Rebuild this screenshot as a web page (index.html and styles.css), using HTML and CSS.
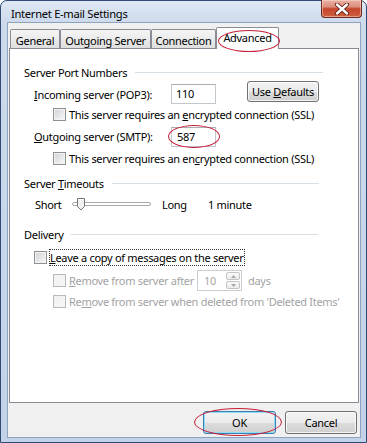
FILE: index.html
```html
<!DOCTYPE html>
<html>
<head>
<meta charset="utf-8">
<title>Internet E-mail Settings</title>
<link rel="stylesheet" href="styles.css">
</head>
<body>
<div class="window">
  <div class="titlebar">
    <span class="title">Internet E-mail Settings</span>
    <span class="close">
      <svg width="16" height="12" viewBox="0 0 16 12">
        <path d="M3 1.5 L13 10.5 M13 1.5 L3 10.5" stroke="#5a1d14" stroke-width="4.2" stroke-linecap="round"/>
        <path d="M3 1.5 L13 10.5 M13 1.5 L3 10.5" stroke="#ffffff" stroke-width="2.4" stroke-linecap="round"/>
      </svg>
    </span>
  </div>
  <div class="frame-body">
    <div class="client">
      <div class="tabs">
        <div class="tab tab-general">General</div>
        <div class="tab tab-outgoing">Outgoing Server</div>
        <div class="tab tab-connection">Connection</div>
        <div class="tab tab-advanced active">Advanced<span class="ring ring-tab"></span></div>
      </div>
      <div class="panel">
        <div class="group-title gt-ports"><span>Server Port Numbers</span></div>
        <div class="row row-in">
          <span class="port-label"><u>I</u>ncoming server (POP3):</span>
          <span class="textbox tb-in">110</span>
          <button class="btn btn-defaults"><span>Use <u>D</u>efaults</span></button>
        </div>
        <div class="row row-check check-1">
          <span class="checkbox"></span>
          <span class="check-label">This server requires an <u>e</u>ncrypted connection (SSL)</span>
        </div>
        <div class="row row-out">
          <span class="port-label"><u>O</u>utgoing server (SMTP):</span>
          <span class="textbox tb-out">587<span class="ring ring-587"></span></span>
        </div>
        <div class="row row-check check-2">
          <span class="checkbox"></span>
          <span class="check-label">This server requires an en<u>c</u>rypted connection (SSL)</span>
        </div>
        <div class="group-title gt-timeouts"><span>Server <u>T</u>imeouts</span></div>
        <div class="row row-slider">
          <span class="slider-short">Short</span>
          <svg class="slider" width="80" height="16" viewBox="0 0 80 16">
            <rect x="0.5" y="6.5" width="78" height="3" rx="1.5" fill="#ffffff" stroke="#a8a8a8"/>
            <path d="M5.5 2.5 H12.5 V10.5 L9 14 L5.5 10.5 Z" fill="#f1f1f1" stroke="#767676"/>
            <path d="M6.5 3.5 H11.5" stroke="#ffffff"/>
          </svg>
          <span class="slider-long">Long</span>
          <span class="slider-value">1 minute</span>
        </div>
        <div class="group-title gt-delivery"><span>Delivery</span></div>
        <div class="row row-leave">
          <span class="checkbox"></span>
          <span class="check-label focus"><u>L</u>eave a copy of messages on the server</span>
        </div>
        <div class="row row-check row-after disabled">
          <span class="checkbox"></span>
          <span class="check-label after-label"><u>R</u>emove from server after</span>
          <span class="spinbox">
            <span class="spin-val">10</span>
            <span class="spin-btns">
              <span class="spin-btn"><svg width="5" height="3" viewBox="0 0 5 3"><path d="M0 3 L2.5 0 L5 3 Z" fill="#a9a9a9"/></svg></span>
              <span class="spin-btn"><svg width="5" height="3" viewBox="0 0 5 3"><path d="M0 0 L2.5 3 L5 0 Z" fill="#a9a9a9"/></svg></span>
            </span>
          </span>
          <span class="days">days</span>
        </div>
        <div class="row row-check row-deleted disabled">
          <span class="checkbox"></span>
          <span class="check-label">Re<u>m</u>ove from server when deleted from 'Deleted Items'</span>
        </div>
      </div>
      <div class="buttons">
        <button class="btn btn-ok"><span>OK</span><span class="ring ring-ok"></span></button>
        <button class="btn btn-cancel"><span>Cancel</span></button>
      </div>
    </div>
  </div>
</div>
</body>
</html>
```

FILE: styles.css
```css
* { box-sizing: border-box; margin: 0; padding: 0; }
html, body { width: 367px; height: 443px; overflow: hidden; }
body {
  font-family: "Noto Sans", "Segoe UI", sans-serif;
  font-size: 11px;
  letter-spacing: -0.3px;
  color: #000;
  background: #ffffff;
}
u { text-decoration: underline; text-underline-offset: 1px; }

.window {
  width: 367px;
  height: 443px;
  border: 1px solid #2f4a73;
  border-radius: 7px 7px 0 0;
  background: linear-gradient(180deg, #dfe8f4 0, #cddaec 22px, #c2d3e9 100%);
  display: flex;
  flex-direction: column;
}
.titlebar {
  height: 21px;
  flex: none;
  display: flex;
  justify-content: space-between;
  align-items: flex-start;
  padding-left: 10px;
}
.title { margin-top: 6px; line-height: 14px; font-size: 11.2px; color: #000; }
.close {
  width: 41px;
  height: 18px;
  margin-top: -1px;
  margin-right: 4px;
  border: 1px solid #6b2a22;
  border-top: none;
  border-radius: 0 0 4px 4px;
  background: linear-gradient(180deg, #eab2a5 0, #dc8e7c 40%, #c5452d 52%, #d0603e 100%);
  box-shadow: inset 0 0 0 1px rgba(255, 220, 210, 0.5);
  display: flex;
  align-items: center;
  justify-content: center;
}

.frame-body {
  flex: 1;
  display: flex;
  padding: 0 5px 4px 6px;
}
.client {
  flex: 1;
  border: 1px solid #8ea3c0;
  background: #f0f0f0;
  display: flex;
  flex-direction: column;
}

.tabs {
  height: 25px;
  flex: none;
  display: flex;
  align-items: flex-end;
  padding-left: 2px;
}
.tab {
  height: 19px;
  border: 1px solid #898c95;
  border-bottom: none;
  border-radius: 2px 2px 0 0;
  background: linear-gradient(180deg, #f5f5f5 0, #ebebeb 50%, #dedede 100%);
  text-align: center;
  line-height: 14px;
  padding-top: 4px;
}
.tab-general { width: 50px; }
.tab-outgoing { width: 91px; }
.tab-connection { width: 65px; }
.tab-advanced { width: 63px; }
.tab.active {
  position: relative;
  z-index: 2;
  height: 22px;
  margin-bottom: -1px;
  padding-top: 3px;
  background: linear-gradient(180deg, #ffffff 0, #fbfcfe 100%);
}

.panel {
  height: 355px;
  flex: none;
  margin: 0 1px;
  border: 1px solid #898c95;
  background: #ffffff;
  display: flex;
  flex-direction: column;
}

.group-title {
  display: flex;
  align-items: center;
  height: 16px;
  margin-left: 14px;
  margin-right: 36px;
  white-space: nowrap;
}
.group-title::after {
  content: "";
  flex: 1;
  height: 1px;
  margin-left: 8px;
  background: #d5dfe5;
}
.gt-ports { margin-top: 15px; margin-right: 35px; }
.gt-timeouts { margin-top: 9px; margin-right: 39px; }
.gt-delivery { margin-top: 14px; margin-right: 40px; }

.row {
  display: flex;
  margin-left: 24px;
  white-space: nowrap;
}
.row-in { height: 24px; align-items: flex-start; }
.row-out { height: 22px; margin-top: 3px; align-items: flex-start; }
.port-label { width: 137px; line-height: 16px; margin-top: 7px; }
.row-out .port-label { margin-top: 4px; }

.textbox {
  position: relative;
  width: 45px;
  height: 20px;
  border: 1px solid #c2c6cd;
  border-top-color: #abadb3;
  background: #fff;
  line-height: 18px;
  padding-left: 4px;
}
.tb-in { margin-top: 4px; }
.tb-out { margin-top: 2px; padding-left: 5px; }

.btn {
  font: inherit;
  letter-spacing: inherit;
  color: #000;
  border: 1px solid #707070;
  border-radius: 3px;
  background: linear-gradient(180deg, #f2f2f2 0, #ebebeb 50%, #dddddd 51%, #cfcfcf 100%);
  box-shadow: inset 0 0 0 1px rgba(255, 255, 255, 0.75);
  display: flex;
  align-items: center;
  justify-content: center;
  position: relative;
}
.btn-defaults { width: 72px; height: 21px; margin-top: 1px; margin-left: 31px; }

.row-check { height: 15px; align-items: center; padding-left: 19px; }
.check-1 { margin-top: 3px; }
.check-2 { margin-top: 4px; }
.checkbox {
  width: 13px;
  height: 13px;
  flex: none;
  border: 1px solid #8e8f8f;
  background: linear-gradient(135deg, #cbcfd5 0, #e6e8eb 55%, #f7f7f7 100%);
  box-shadow: inset 0 0 0 1px #f4f4f4;
}
.check-label { margin-left: 3px; line-height: 15px; }

.row-slider { height: 16px; margin-top: 5px; align-items: center; }
.slider-short { width: 38px; padding-left: 1px; }
.slider { flex: none; }
.slider-long { width: 46px; margin-left: 10px; }

.row-leave { height: 17px; margin-top: 7px; align-items: center; }
.check-label.focus {
  margin-left: 2px;
  border: 1px dotted #333;
  line-height: 15px;
  padding: 0 1px 0 0;
}

.disabled { color: #a3a3a3; }
.disabled .checkbox {
  border-color: #b9b9b9;
  background: linear-gradient(135deg, #f0f0f0 0, #f7f7f7 100%);
  box-shadow: none;
}
.row-after { height: 22px; margin-top: 3px; }
.after-label { width: 128px; }
.spinbox {
  width: 45px;
  height: 21px;
  border: 1px solid #c9ccd1;
  background: #fff;
  display: flex;
  align-items: center;
  justify-content: space-between;
  padding: 1px 1px 1px 6px;
  align-self: flex-start;
  margin-top: 1px;
}
.spin-val { line-height: 16px; color: #a7a7a7; }
.spin-btns {
  width: 14px;
  height: 17px;
  display: flex;
  flex-direction: column;
  gap: 1px;
}
.spin-btn {
  flex: 1;
  border: 1px solid #c4c4c4;
  border-radius: 2px;
  background: linear-gradient(180deg, #fafafa 0, #ececec 100%);
  display: flex;
  align-items: center;
  justify-content: center;
}
.days { margin-left: 6px; }
.row-deleted { height: 16px; margin-top: 2px; }

.buttons {
  display: flex;
  justify-content: flex-end;
  gap: 9px;
  margin-top: 8px;
  padding-right: 3px;
}
.btn-ok {
  width: 73px;
  height: 23px;
  border-color: #3c7fb1;
  box-shadow: inset 0 0 0 1px #8fdcf5;
}
.btn-cancel { width: 72px; height: 23px; }

.ring {
  position: absolute;
  border: 1px solid #c8203a;
  border-radius: 50%;
  pointer-events: none;
}
.ring-tab { left: 1px; top: 2px; width: 62px; height: 22px; }
.ring-587 { left: -4px; top: -3px; width: 52px; height: 23px; }
.ring-ok { left: -10px; top: -4px; width: 88px; height: 28px; }
```
